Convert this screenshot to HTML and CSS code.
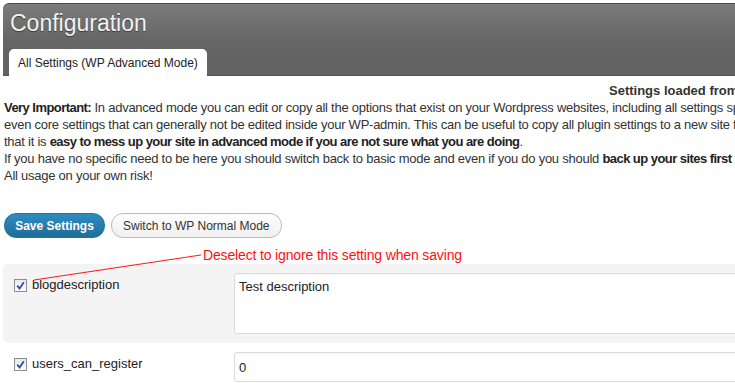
FILE: index.html
```html
<!DOCTYPE html>
<html lang="en">
<head>
    <meta charset="UTF-8">
    <title>Configuration</title>
    <link rel="stylesheet" href="styles.css">
</head>
<body>
    <div class="page">
        <div class="header">
            <h1 class="title">Configuration</h1>
            <div class="tabs">
                <div class="tab active">All Settings (WP Advanced Mode)</div>
            </div>
        </div>

        <div class="content">
            <div class="loaded">Settings loaded from: demo-site.com</div>
            <p class="warning">
                <b>Very Important:</b> In advanced mode you can edit or copy all the options that exist on your Wordpress websites, including all settings specific to plugins and themes,<br>
                even core settings that can generally not be edited inside your WP-admin. This can be useful to copy all plugin settings to a new site for example. Please be aware<br>
                that it is <b>easy to mess up your site in advanced mode if you are not sure what you are doing</b>.<br>
                If you have no specific need to be here you should switch back to basic mode and even if you do you should <b>back up your sites first</b> before saving anything.<br>
                All usage on your own risk!
            </p>

            <div class="actions">
                <button class="btn primary">Save Settings</button>
                <button class="btn">Switch to WP Normal Mode</button>
            </div>

            <div class="note">Deselect to ignore this setting when saving</div>

            <div class="options">
                <div class="option odd">
                    <label class="opt-name"><span class="check"><svg width="9" height="9" viewBox="0 0 9 9"><path d="M1.2 4.6 L3.6 7.4 L7.8 1.2" fill="none" stroke="#2b4fa8" stroke-width="1.8"/></svg></span>blogdescription</label>
                    <textarea class="field area">Test description</textarea>
                </div>
                <div class="option">
                    <label class="opt-name"><span class="check"><svg width="9" height="9" viewBox="0 0 9 9"><path d="M1.2 4.6 L3.6 7.4 L7.8 1.2" fill="none" stroke="#2b4fa8" stroke-width="1.8"/></svg></span>users_can_register</label>
                    <input class="field" type="text" value="0">
                </div>
            </div>
        </div>

        <svg class="pointer" width="735" height="383">
            <line x1="34" y1="277" x2="201" y2="252" stroke="#ff1a1a" stroke-width="1.2"/>
        </svg>
    </div>
</body>
</html>
```

FILE: styles.css
```css
* {
    box-sizing: border-box;
}

body {
    margin: 0;
    overflow: hidden;
    background: #fff;
    font-family: "Liberation Sans", Arial, sans-serif;
    font-size: 13px;
    color: #333;
}

.page {
    position: relative;
    width: 1100px;
    height: 383px;
}

.header {
    margin: 3px 0 0 3px;
    height: 73px;
    background: linear-gradient(#7b7b7b, #656565 55%, #626262);
    border-top: 1px solid #4a4a4a;
    border-bottom: 1px solid #555;
    border-radius: 6px 0 0 0;
    display: flex;
    flex-direction: column;
    justify-content: space-between;
}

.title {
    margin: 0;
    padding: 5px 0 0 7px;
    font-size: 23px;
    font-weight: normal;
    line-height: 28px;
    color: #f2f2f2;
    text-shadow: 0 1px 1px #3a3a3a;
}

.tabs {
    display: flex;
    padding-left: 6px;
}

.tab {
    height: 27px;
    width: 198px;
    padding: 7px 0 0 9px;
    background: #fff;
    border-radius: 5px 5px 0 0;
    font-size: 12px;
    color: #222;
    margin-bottom: -1px;
}

.content {
    padding: 6px 0 0 4px;
}

.loaded {
    padding-left: 605px;
    font-weight: bold;
    line-height: 17px;
    white-space: nowrap;
}

.warning {
    margin: 0;
    line-height: 17px;
    letter-spacing: -0.25px;
    white-space: nowrap;
}

.warning b {
    color: #222;
    letter-spacing: -0.55px;
}

.actions {
    display: flex;
    gap: 6px;
    margin-top: 29px;
}

.btn {
    height: 25px;
    padding: 0 11px;
    border: 1px solid #bbb;
    border-radius: 12px;
    background: linear-gradient(#fefefe, #f0f0f0);
    font-family: "Liberation Sans", Arial, sans-serif;
    font-size: 12px;
    color: #333;
    white-space: nowrap;
}

.btn.primary {
    width: 101px;
    padding: 0;
    border-color: #21759b;
    background: linear-gradient(#2f8cc0, #1f6d99);
    color: #fff;
    font-weight: bold;
}

.note {
    margin: 9px 0 0 199px;
    font-size: 14px;
    line-height: 16px;
    letter-spacing: -0.15px;
    color: #ff1010;
}

.options {
    margin: 1px 0 0 -1px;
}

.option {
    display: grid;
    grid-template-columns: 220px 1fr;
    align-items: start;
    padding: 9px 0 9px 11px;
}

.option.odd {
    background: #f4f4f4;
    border-radius: 5px 0 0 5px;
}

.opt-name {
    display: flex;
    align-items: center;
    gap: 5px;
    padding-top: 4px;
    line-height: 16px;
    color: #222;
}

.check {
    width: 13px;
    height: 13px;
    border: 1px solid #8d8d8d;
    background: linear-gradient(#e8e8e8, #fff);
    display: flex;
    align-items: center;
    justify-content: center;
}

.field {
    width: 600px;
    height: 30px;
    padding: 5px 4px;
    border: 1px solid #dcdcdc;
    border-radius: 3px;
    background: #fff;
    font-family: "Liberation Sans", Arial, sans-serif;
    font-size: 13px;
    color: #222;
    box-shadow: inset 0 1px 2px rgba(0, 0, 0, 0.05);
}

.field.area {
    height: 61px;
    resize: none;
}

.pointer {
    position: absolute;
    left: 0;
    top: 0;
    pointer-events: none;
}
```
